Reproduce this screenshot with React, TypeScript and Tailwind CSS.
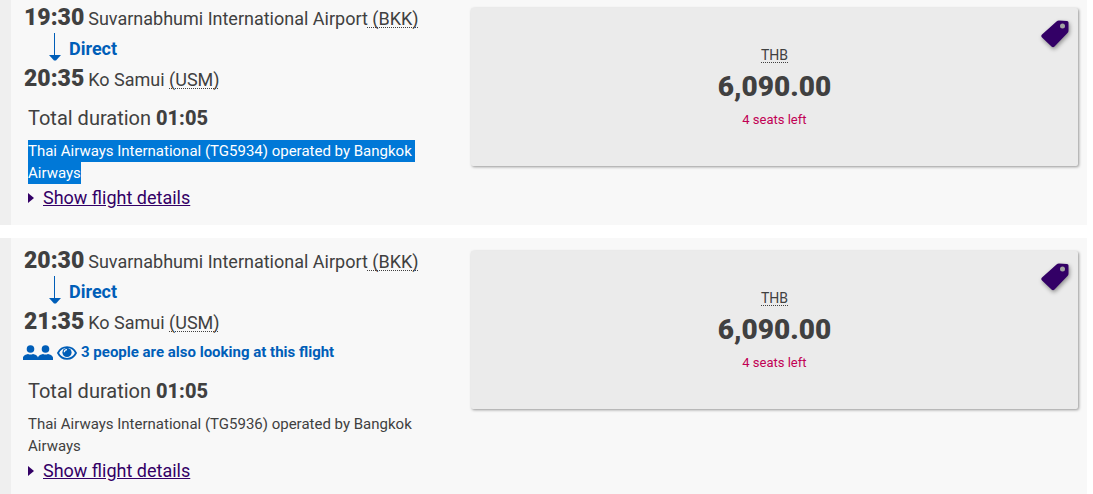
import React from 'react';

interface Flight {
  departs: string;
  arrives: string;
  duration: string;
  airline: string;
  selected: boolean;
  viewers: number;
  price: string;
  seatsLeft: number;
}

const flights: Flight[] = [
  {
    departs: '19:30',
    arrives: '20:35',
    duration: '01:05',
    airline: 'Thai Airways International (TG5934) operated by Bangkok Airways',
    selected: true,
    viewers: 0,
    price: '6,090.00',
    seatsLeft: 4,
  },
  {
    departs: '20:30',
    arrives: '21:35',
    duration: '01:05',
    airline: 'Thai Airways International (TG5936) operated by Bangkok Airways',
    selected: false,
    viewers: 3,
    price: '6,090.00',
    seatsLeft: 4,
  },
];

const dotted = 'underline decoration-dotted decoration-1 underline-offset-2 [text-decoration-skip-ink:none]';

const PeopleIcon = () => (
  <svg width="30" height="16" viewBox="0 0 30 16" fill="#005eb8" aria-hidden="true">
    <circle cx="7.5" cy="4" r="3.8" />
    <circle cx="22.5" cy="4" r="3.8" />
    <path d="M0 15v-2.2C0 10.8 3 9.4 5 9Q7.500 10 10 9C12 9.400 15 10.800 15 12.800V15z" />
    <path d="M15 15v-2.200C15 10.800 18 9.400 20 9Q22.500 10 25 9C27 9.400 30 10.800 30 12.800V15z" />
  </svg>
);

const EyeIcon = () => (
  <svg width="20" height="14" viewBox="0 0 20 14" aria-hidden="true">
    <path d="M1 7C3 3 6.3 1.2 10 1.2S17 3 19 7c-2 4-5.3 5.8-9 5.8S3 11 1 7z" fill="#f8f8f8" stroke="#005eb8" strokeWidth="1.8" />
    <circle cx="10" cy="6.5" r="4.6" fill="#005eb8" />
    <path d="M7.3 6.3A2.7 2.7 0 0 1 10 3.7" fill="none" stroke="#f8f8f8" strokeWidth="1.2" />
  </svg>
);

const ArrowIcon = () => (
  <svg width="12" height="28" viewBox="0 0 12 28" fill="#005eb8" aria-hidden="true">
    <path d="M5 0h1v23H5z" />
    <path d="M0 22h12l-5 5.500H5z" />
  </svg>
);

const TagIcon = () => (
  <svg width="28" height="28" viewBox="0 0 28 28" className="drop-shadow-[1px_2px_2px_rgba(0,0,0,0.4)]" aria-hidden="true">
    <path d="M15.5 1.5Q16.5.5 18 .5L26 1Q27.5 1 27.5 2.5V10.5Q27.5 12 26.5 13L13.5 26.5Q12 28 10.5 26.5L1 17.5Q-.5 16 1 14.5z" fill="#330066" />
    <circle cx="21.5" cy="6" r="2.5" fill="#a3a3a3" />
  </svg>
);

const Stop = ({ time, place, code }: { time: string; place: string; code: React.ReactNode }) => (
  <div className="flex h-[30px] items-baseline gap-1 text-lg leading-[30px]">
    <strong className="text-[23px] leading-[30px] font-black">{time}</strong>
    <span className="whitespace-nowrap">
      {place}
      {code}
    </span>
  </div>
);

const PricePanel = ({ flight }: { flight: Flight }) => (
  <div className="relative flex h-[158px] flex-1 flex-col items-center rounded-xs bg-[#ebebeb] pt-9 shadow-[1px_1px_3px_rgba(0,0,0,0.4)]">
    <div className="absolute top-3 right-[9px]">
      <TagIcon />
    </div>
    <abbr title="Thai Baht" className="border-b border-dotted border-[#404040] pt-1 text-sm leading-[14px] no-underline">
      THB
    </abbr>
    <strong className="mt-2 text-[28px] leading-8 font-black">{flight.price}</strong>
    <span className="mt-[7px] text-[13px] leading-5 text-[#c10054]">{flight.seatsLeft} seats left</span>
  </div>
);

const FlightCard = ({ flight, first }: { flight: Flight; first: boolean }) => (
  <article className={`flex border-l-[11px] border-[#efefef] bg-[#f8f8f8] pr-[9px] pb-[13px] ${first ? 'pt-[3px]' : 'pt-2'}`}>
    <div className="w-[43.1%] shrink-0 pr-10 pl-[13px]">
      <Stop
        time={flight.departs}
        place="Suvarnabhumi International Airport"
        code={<span className={dotted}>&nbsp;(BKK)</span>}
      />
      <div className="flex h-[31px] items-start gap-2 pl-[25px] text-lg leading-8 font-bold text-[#005eb8]">
        <ArrowIcon />
        Direct
      </div>
      <Stop time={flight.arrives} place="Ko Samui " code={<span className={dotted}>(USM)</span>} />
      {flight.viewers > 0 && (
        <div className="-ml-px flex h-[30px] items-center gap-1 pt-px text-[15px] font-bold text-[#005eb8]">
          <PeopleIcon />
          <EyeIcon />
          {flight.viewers} people are also looking at this flight
        </div>
      )}
      <div className="pl-1">
        <p className="mt-2 text-xl leading-8">
          Total duration <strong className="font-extrabold">{flight.duration}</strong>
        </p>
        <p className="mt-1.5 text-[15px] leading-[22px] whitespace-break-spaces">
          <span className={flight.selected ? 'bg-[#0078d7] py-0.5 text-white' : ''}>{flight.airline}</span>
        </p>
        <a href="#details" className="flex items-center gap-2 text-lg leading-7 text-[#330066]">
          <svg width="7" height="12" viewBox="0 0 7 12" fill="#330066" aria-hidden="true">
            <path d="M0 1l6 5-6 5z" />
          </svg>
          <span className="underline">Show flight details</span>
        </a>
      </div>
    </div>
    <div className="flex flex-1 items-start pt-[5px]">
      <PricePanel flight={flight} />
    </div>
  </article>
);

export default function App() {
  return (
    <main className="flex h-screen flex-col gap-[13px] overflow-hidden bg-white pr-[6px] font-['Roboto',sans-serif] text-[#404040]">
      {flights.map((flight, i) => (
        <FlightCard key={flight.departs} flight={flight} first={i === 0} />
      ))}
    </main>
  );
}
